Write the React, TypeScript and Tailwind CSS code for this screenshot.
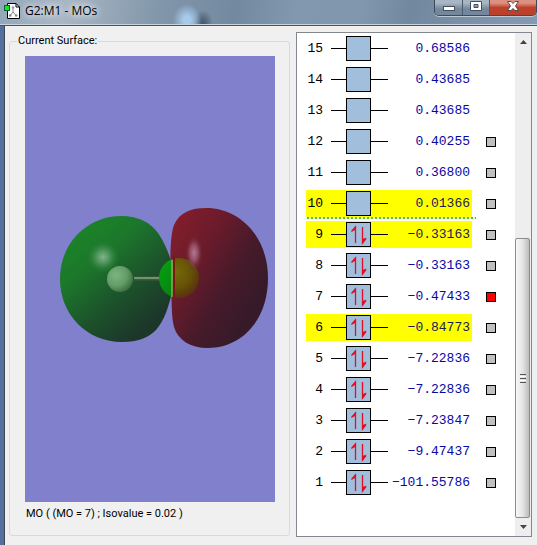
import React from "react";

type Orbital = {
  n: number;
  energy: string;
  occupied: boolean;
  highlighted?: boolean;
  surface?: "none" | "ready" | "current";
};

const orbitals: Orbital[] = [
  { n: 15, energy: "0.68586", occupied: false, surface: "none" },
  { n: 14, energy: "0.43685", occupied: false, surface: "none" },
  { n: 13, energy: "0.43685", occupied: false, surface: "none" },
  { n: 12, energy: "0.40255", occupied: false },
  { n: 11, energy: "0.36800", occupied: false },
  { n: 10, energy: "0.01366", occupied: false, highlighted: true },
  { n: 9, energy: "−0.33163", occupied: true, highlighted: true },
  { n: 8, energy: "−0.33163", occupied: true },
  { n: 7, energy: "−0.47433", occupied: true, surface: "current" },
  { n: 6, energy: "−0.84773", occupied: true, highlighted: true },
  { n: 5, energy: "−7.22836", occupied: true },
  { n: 4, energy: "−7.22836", occupied: true },
  { n: 3, energy: "−7.23847", occupied: true },
  { n: 2, energy: "−9.47437", occupied: true },
  { n: 1, energy: "−101.55786", occupied: true },
];

function AppIcon() {
  return (
    <svg className="size-4 shrink-0" viewBox="0 0 16 16" aria-hidden="true">
      <path d="M3.500.5H12L15.500 4V15.500H3.500Z" fill="#fff" stroke="#000" />
      <path d="M12 .5V4H15.500" fill="none" stroke="#000" />
      <path d="M9 5V9L6 12.500M9 9L12 12.500" fill="none" stroke="#888" />
      <circle cx="9" cy="4.500" r="1.300" fill="#999" />
      <circle cx="6.200" cy="12.500" r="1.300" fill="#888" />
      <circle cx="12.200" cy="12.500" r="1.300" fill="#888" />
      <rect x=".5" y="2.500" width="5" height="5" fill="#18e818" stroke="#063" />
    </svg>
  );
}

function TitleBar() {
  return (
    <header className="flex h-[26px] items-start justify-between border-b border-[#46525e] bg-[radial-gradient(ellipse_14px_16px_at_187px_20px,#a5caec_25%,transparent),radial-gradient(ellipse_10px_14px_at_203px_24px,#425466,transparent),linear-gradient(100deg,#93a6b9_0%,#a9b7c5_12%,#8196aa_30%,#73899f_44%,#8298af_55%,#8197ae_67%,#72889f_76%,#849bb3_100%)] pl-1 shadow-[inset_0_-1px_#c9d3dc]">
      <div className="flex items-center gap-[5px] pt-[2px]">
        <AppIcon />
        <h1 className="font-['Open_Sans','Noto_Sans',sans-serif] text-[12px] leading-[18px] text-black [text-shadow:0_0_6px_#fff,0_0_8px_#fff]">
          G2:M1 - MOs
        </h1>
      </div>
      <div className="flex h-4 overflow-hidden rounded-b-[5px] border border-t-0 border-[#3d4a58] shadow-[0_1px_#bdc9d5]">
        <button
          aria-label="Minimize"
          className="flex w-[28px] items-center justify-center border-r border-[#4b5a6a] bg-linear-to-b from-[#a9b6c4] from-20% to-[#74879c] to-60%"
        >
          <svg width="14" height="15" viewBox="0 0 14 15">
            <rect x="1.500" y="6.500" width="11" height="4" fill="#fff" stroke="#46505c" />
          </svg>
        </button>
        <button
          aria-label="Maximize"
          className="flex w-[27px] items-center justify-center border-r border-[#4b5a6a] bg-linear-to-b from-[#a9b6c4] from-20% to-[#74879c] to-60%"
        >
          <svg width="14" height="15" viewBox="0 0 14 15">
            <path
              d="M1.500 1.500H12.500V10.500H1.500ZM5 4.500V7.500H9V4.500Z"
              fill="#fff"
              fillRule="evenodd"
              stroke="#46505c"
            />
          </svg>
        </button>
        <button
          aria-label="Close"
          className="flex w-[46px] items-center justify-center bg-linear-to-b from-[#dc9182] from-20% via-[#c1402a] via-50% to-[#b8412c]"
        >
          <svg width="14" height="15" viewBox="0 0 14 15">
            <path
              d="M1.500 1.500H5L7 3.500L9 1.500H12.500L9.500 6L12.500 10.500H9L7 8.500L5 10.500H1.500L4.500 6Z"
              fill="#fff"
              stroke="#504a52"
            />
          </svg>
        </button>
      </div>
    </header>
  );
}

function SurfaceView() {
  return (
    <svg
      className="h-[446px] w-full bg-[#8080cc]"
      viewBox="25 56 250 446"
      role="img"
      aria-label="Molecular orbital surface"
    >
      <defs>
        <linearGradient id="green" x1="0.15" y1="0.1" x2="0.75" y2="0.9">
          <stop offset="0" stopColor="#1b8428" />
          <stop offset="0.3" stopColor="#1c772b" />
          <stop offset="0.65" stopColor="#1c532b" />
          <stop offset="1" stopColor="#1c362a" />
        </linearGradient>
        <linearGradient id="red" x1="0.05" y1="0.1" x2="0.8" y2="0.75">
          <stop offset="0" stopColor="#821d2c" />
          <stop offset="0.35" stopColor="#6a1b2b" />
          <stop offset="0.7" stopColor="#471a2a" />
          <stop offset="1" stopColor="#371a29" />
        </linearGradient>
        <radialGradient id="glowGreen">
          <stop offset="0" stopColor="#80b58b" />
          <stop offset="0.35" stopColor="#66a373" stopOpacity="0.75" />
          <stop offset="1" stopColor="#1c772b" stopOpacity="0" />
        </radialGradient>
        <radialGradient id="glowRed">
          <stop offset="0" stopColor="#c0839b" />
          <stop offset="0.45" stopColor="#a06078" stopOpacity="0.8" />
          <stop offset="1" stopColor="#701b2b" stopOpacity="0" />
        </radialGradient>
        <radialGradient id="hydrogen" cx="0.35" cy="0.35" r="0.7">
          <stop offset="0" stopColor="#7db381" />
          <stop offset="0.6" stopColor="#649c68" />
          <stop offset="1" stopColor="#3c6c40" />
        </radialGradient>
        <linearGradient id="fluorine" x1="0" y1="0.2" x2="1" y2="0.9">
          <stop offset="0" stopColor="#07a012" />
          <stop offset="1" stopColor="#056c0c" />
        </linearGradient>
        <radialGradient id="veiled" cx="0.4" cy="0.35" r="0.7">
          <stop offset="0" stopColor="#776a0a" />
          <stop offset="0.55" stopColor="#665407" />
          <stop offset="1" stopColor="#582d10" />
        </radialGradient>
        <clipPath id="leftHalf">
          <rect x="155" y="250" width="17" height="60" />
        </clipPath>
        <clipPath id="rightHalf">
          <rect x="172" y="250" width="40" height="60" />
        </clipPath>
      </defs>
      <path
        d="M121 216C139 216 151 223 158 233C165 243 171 258 172 266V292C169 306 164 321 156 330C148 338 138 342 122 342C87 342 60 315 60 279C60 242 88 216 121 216Z"
        fill="url(#green)"
      />
      <ellipse cx="103" cy="257" rx="17" ry="17" fill="url(#glowGreen)" />
      <path d="M134 278.500H162" stroke="#3b5c3b" strokeWidth="4" />
      <path d="M134 278H162" stroke="#71926f" strokeWidth="2" />
      <circle cx="120" cy="279" r="13" fill="url(#hydrogen)" />
      <path
        d="M171 278C170 260 170 236 174 225C180 212 191 208 206 208C241 208 268 238 268 278C268 320 242 348 208 348C190 348 178 340 174 327C171 315 172 300 171 278Z"
        fill="url(#red)"
      />
      <circle cx="179" cy="278" r="20" fill="url(#fluorine)" clipPath="url(#leftHalf)" />
      <circle cx="179" cy="278" r="20" fill="url(#veiled)" clipPath="url(#rightHalf)" />
      <ellipse cx="194" cy="253" rx="9" ry="18" fill="url(#glowRed)" opacity="0.9" />
      <path d="M172 260V297" stroke="#71ee71" />
      <path d="M174 256V300" stroke="#791719" strokeWidth="2" />
    </svg>
  );
}

function SpinPair() {
  return (
    <svg viewBox="0 0 23 23" className="size-[23px]" aria-hidden="true">
      <path d="M8.500 20V4L4.500 8.500" fill="none" stroke="#e01020" strokeWidth="1.300" />
      <path d="M8.500 3L4.500 8.500L8.500 7Z" fill="#e01020" />
      <path d="M15.500 4V20L19 15.500" fill="none" stroke="#e01020" strokeWidth="1.300" />
      <path d="M15.500 21L19.500 14.500L15.500 16Z" fill="#e01020" />
    </svg>
  );
}

function OrbitalRow({ orbital }: { orbital: Orbital }) {
  const { n, energy, occupied, highlighted, surface = "ready" } = orbital;
  return (
    <li className="relative flex h-[31px] items-center gap-[14px] pl-[9px]">
      <label
        htmlFor={surface === "none" ? undefined : `mo-${n}`}
        className={`flex h-[27px] w-[166px] items-center ${highlighted ? "bg-[#ffff00]" : ""}`}
      >
        <span className="w-[17px] text-right text-black">{n}</span>
        <span className="ml-2 h-px w-[15px] bg-black" />
        <span className="size-[25px] shrink-0 border border-black bg-[#a2bedd]">
          {occupied && <SpinPair />}
        </span>
        <span className="h-px w-[17px] shrink-0 bg-black" />
        <span
          className={`flex w-[82px] shrink-0 justify-end ${highlighted ? "text-[#202058]" : "text-[#0808a4]"}`}
        >
          {energy}
        </span>
      </label>
      {surface !== "none" && (
        <input
          id={`mo-${n}`}
          type="checkbox"
          defaultChecked={surface === "current"}
          className="size-[10px] appearance-none border border-black bg-[#c0c0c0] checked:bg-[#ff0000]"
        />
      )}
      {n === 10 && (
        <span className="absolute bottom-0 left-[10px] h-[2px] w-[169px] bg-[repeating-linear-gradient(90deg,#58c030_0_2px,#e4f8c8_2px_4px)]" />
      )}
    </li>
  );
}

function Scrollbar() {
  return (
    <div className="flex w-4 shrink-0 flex-col bg-[#eeeeee]">
      <button aria-label="Scroll up" className="flex h-[17px] items-center justify-center">
        <svg width="7" height="4" viewBox="0 0 7 4">
          <path d="M0 4L3.500 0L7 4Z" fill="#444" />
        </svg>
      </button>
      <div className="flex flex-1 flex-col justify-end">
        <div className="flex h-[280px] w-[15px] flex-col items-center justify-center gap-px rounded-[2px] border border-[#8c8c8c] bg-linear-to-r from-[#f8f8f8] via-[#e5e5e5] via-50% to-[#bcbcbc]">
          <span className="h-px w-[6px] bg-[#555]" />
          <span className="h-px w-[6px] bg-white" />
          <span className="h-px w-[6px] bg-[#555]" />
          <span className="h-px w-[6px] bg-white" />
          <span className="h-px w-[6px] bg-[#555]" />
        </div>
      </div>
      <button aria-label="Scroll down" className="flex h-[18px] items-center justify-center">
        <svg width="7" height="4" viewBox="0 0 7 4">
          <path d="M0 0L3.500 4L7 0Z" fill="#444" />
        </svg>
      </button>
    </div>
  );
}

export default function App() {
  return (
    <div className="flex min-h-screen flex-col bg-[#f0f0f0]">
      <TitleBar />
      <main className="flex flex-1 gap-[6px] border-l-4 border-l-[#536f9c] pt-[6px] pr-[5px] pb-2 pl-[5px] shadow-[inset_1px_0_#3c4654]">
        <fieldset className="mt-[2px] mb-px min-w-0 flex-1 rounded-[3px] border border-[#d5dadf] pr-[14px] pl-[15px] font-[Roboto,'Liberation_Sans',sans-serif] text-[11px] leading-[14px] text-black">
          <legend className="-ml-2 px-px">Current Surface:</legend>
          <div className="flex flex-col gap-[5px] pt-2">
            <SurfaceView />
            <p className="px-px">MO ( (MO = 7) ; Isovalue = 0.02 )</p>
          </div>
        </fieldset>
        <section
          aria-label="Orbitals"
          className="flex w-[236px] shrink-0 border border-[#828790] bg-white"
        >
          <ul className="flex-1 font-['Liberation_Mono','Courier_New',monospace] text-[13px] leading-4">
            {orbitals.map((o) => (
              <OrbitalRow key={o.n} orbital={o} />
            ))}
          </ul>
          <Scrollbar />
        </section>
      </main>
    </div>
  );
}
